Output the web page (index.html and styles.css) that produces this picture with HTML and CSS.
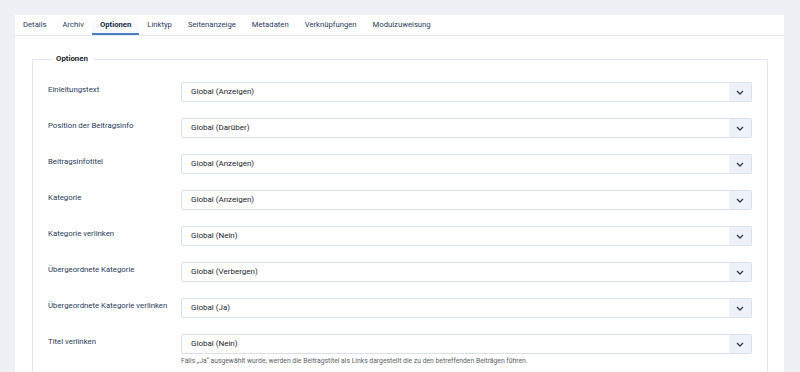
FILE: index.html
```html
<!DOCTYPE html>
<html lang="de">
<head>
<meta charset="utf-8">
<title>Optionen</title>
<link rel="stylesheet" href="styles.css">
</head>
<body>
<div class="card">
  <nav class="tabs">
    <span class="tab">Details</span>
    <span class="tab">Archiv</span>
    <span class="tab active">Optionen</span>
    <span class="tab">Linktyp</span>
    <span class="tab">Seitenanzeige</span>
    <span class="tab">Metadaten</span>
    <span class="tab">Verknüpfungen</span>
    <span class="tab">Modulzuweisung</span>
  </nav>
  <fieldset class="group">
    <legend class="legend">Optionen</legend>
    <div class="row"><label class="label">Einleitungstext</label><div class="field"><div class="select"><span class="value">Global (Anzeigen)</span><span class="caret"><svg width="8" height="5" viewBox="0 0 8 5"><path d="M1 1l3 3 3-3" fill="none" stroke="#3b4047" stroke-width="1.4"/></svg></span></div></div></div>
    <div class="row"><label class="label">Position der Beitragsinfo</label><div class="field"><div class="select"><span class="value">Global (Darüber)</span><span class="caret"><svg width="8" height="5" viewBox="0 0 8 5"><path d="M1 1l3 3 3-3" fill="none" stroke="#3b4047" stroke-width="1.4"/></svg></span></div></div></div>
    <div class="row"><label class="label">Beitragsinfotitel</label><div class="field"><div class="select"><span class="value">Global (Anzeigen)</span><span class="caret"><svg width="8" height="5" viewBox="0 0 8 5"><path d="M1 1l3 3 3-3" fill="none" stroke="#3b4047" stroke-width="1.4"/></svg></span></div></div></div>
    <div class="row"><label class="label">Kategorie</label><div class="field"><div class="select"><span class="value">Global (Anzeigen)</span><span class="caret"><svg width="8" height="5" viewBox="0 0 8 5"><path d="M1 1l3 3 3-3" fill="none" stroke="#3b4047" stroke-width="1.4"/></svg></span></div></div></div>
    <div class="row"><label class="label">Kategorie verlinken</label><div class="field"><div class="select"><span class="value">Global (Nein)</span><span class="caret"><svg width="8" height="5" viewBox="0 0 8 5"><path d="M1 1l3 3 3-3" fill="none" stroke="#3b4047" stroke-width="1.4"/></svg></span></div></div></div>
    <div class="row"><label class="label">Übergeordnete Kategorie</label><div class="field"><div class="select"><span class="value">Global (Verbergen)</span><span class="caret"><svg width="8" height="5" viewBox="0 0 8 5"><path d="M1 1l3 3 3-3" fill="none" stroke="#3b4047" stroke-width="1.4"/></svg></span></div></div></div>
    <div class="row"><label class="label">Übergeordnete Kategorie verlinken</label><div class="field"><div class="select"><span class="value">Global (Ja)</span><span class="caret"><svg width="8" height="5" viewBox="0 0 8 5"><path d="M1 1l3 3 3-3" fill="none" stroke="#3b4047" stroke-width="1.4"/></svg></span></div></div></div>
    <div class="row"><label class="label">Titel verlinken</label><div class="field"><div class="select"><span class="value">Global (Nein)</span><span class="caret"><svg width="8" height="5" viewBox="0 0 8 5"><path d="M1 1l3 3 3-3" fill="none" stroke="#3b4047" stroke-width="1.4"/></svg></span></div><div class="help">Falls „Ja“ ausgewählt wurde, werden die Beitragstitel als Links dargestellt die zu den betreffenden Beiträgen führen.</div></div></div>
  </fieldset>
</div>
</body>
</html>
```

FILE: styles.css
```css
html, body {
  margin: 0;
  padding: 0;
}
body {
  background: #edf1f6;
  font-family: Roboto, "Liberation Sans", sans-serif;
  font-size: 8px;
  overflow: hidden;
  height: 372px;
}
.card {
  margin: 15px 0 0 15px;
  width: 769px;
  background: #ffffff;
  min-height: 400px;
}
.tabs {
  display: flex;
  height: 21px;
  border-bottom: 1px solid #e3e8ef;
  box-sizing: border-box;
}
.tab {
  padding: 0 8px;
  line-height: 20px;
  color: #1f3a5a;
  font-weight: 400;
  font-size: 7.7px;
  white-space: nowrap;
}
.tab.active {
  font-weight: 700;
  color: #152c46;
  border-bottom: 2px solid #4d7fc0;
  line-height: 19px;
  background: linear-gradient(#ffffff, #f6f9fd);
}
.group {
  margin: 17px 16px 0 17px;
  padding: 0 15px 20px 15px;
  border: 1px solid #e1e7ef;
  min-width: 0;
}
.legend {
  margin-left: 4px;
  padding: 0 6px 0 4px;
  font-weight: 700;
  font-size: 7.8px;
  line-height: 12px;
  color: #22262a;
}
.row {
  display: flex;
  align-items: flex-start;
  margin-top: 16px;
}
.row:first-of-type {
  margin-top: 17px;
}
.label {
  width: 133px;
  flex: none;
  padding-top: 2px;
  line-height: 12px;
  color: #1f3a5a;
  font-weight: 400;
  font-size: 7.8px;
}
.field {
  flex: 1;
  min-width: 0;
}
.select {
  display: flex;
  height: 20px;
  border: 1px solid #d8e0eb;
  border-radius: 2px;
  box-sizing: border-box;
  overflow: hidden;
  align-items: stretch;
}
.value {
  flex: 1;
  padding-left: 9px;
  line-height: 18px;
  color: #22262a;
}
.caret {
  width: 22px;
  background: #eef2f8;
  display: flex;
  align-items: center;
  justify-content: center;
}
.help {
  margin-top: 2px;
  font-size: 6.8px;
  line-height: 10px;
  color: #5a5f66;
}
```
